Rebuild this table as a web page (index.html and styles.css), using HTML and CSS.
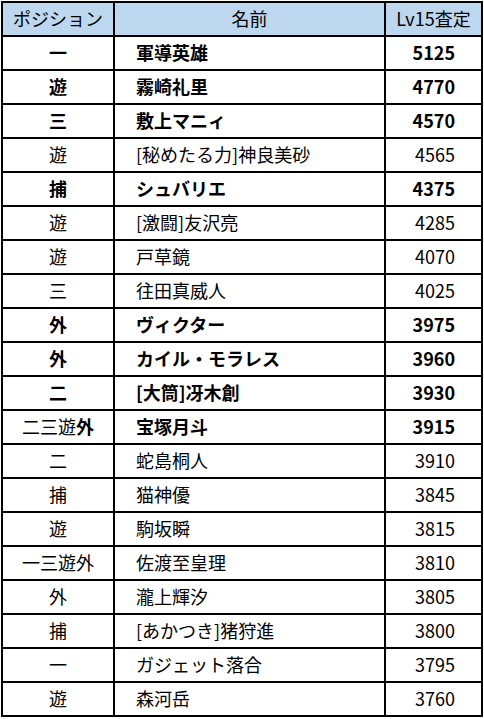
FILE: index.html
```html
<!DOCTYPE html>
<html lang="ja">
<head>
<meta charset="utf-8">
<link rel="stylesheet" href="styles.css">
</head>
<body>
<div class="sheet">
  <div class="cell head pos">ポジション</div>
  <div class="cell head name-h">名前</div>
  <div class="cell head val-h">Lv15査定</div>

  <div class="cell pos b">一</div><div class="cell name b">軍導英雄</div><div class="cell val b">5125</div>
  <div class="cell pos b">遊</div><div class="cell name b">霧崎礼里</div><div class="cell val b">4770</div>
  <div class="cell pos b">三</div><div class="cell name b">敷上マニィ</div><div class="cell val b">4570</div>
  <div class="cell pos">遊</div><div class="cell name">[秘めたる力]神良美砂</div><div class="cell val">4565</div>
  <div class="cell pos b">捕</div><div class="cell name b">シュバリエ</div><div class="cell val b">4375</div>
  <div class="cell pos">遊</div><div class="cell name">[激闘]友沢亮</div><div class="cell val">4285</div>
  <div class="cell pos">遊</div><div class="cell name">戸草鏡</div><div class="cell val">4070</div>
  <div class="cell pos">三</div><div class="cell name">往田真威人</div><div class="cell val">4025</div>
  <div class="cell pos b">外</div><div class="cell name b">ヴィクター</div><div class="cell val b">3975</div>
  <div class="cell pos b">外</div><div class="cell name b">カイル・モラレス</div><div class="cell val b">3960</div>
  <div class="cell pos b">二</div><div class="cell name b">[大筒]冴木創</div><div class="cell val b">3930</div>
  <div class="cell pos">二三遊<b>外</b></div><div class="cell name b">宝塚月斗</div><div class="cell val b">3915</div>
  <div class="cell pos">二</div><div class="cell name">蛇島桐人</div><div class="cell val">3910</div>
  <div class="cell pos">捕</div><div class="cell name">猫神優</div><div class="cell val">3845</div>
  <div class="cell pos">遊</div><div class="cell name">駒坂瞬</div><div class="cell val">3815</div>
  <div class="cell pos">一三遊外</div><div class="cell name">佐渡至皇理</div><div class="cell val">3810</div>
  <div class="cell pos">外</div><div class="cell name">瀧上輝汐</div><div class="cell val">3805</div>
  <div class="cell pos">捕</div><div class="cell name">[あかつき]猪狩進</div><div class="cell val">3800</div>
  <div class="cell pos">一</div><div class="cell name">ガジェット落合</div><div class="cell val">3795</div>
  <div class="cell pos">遊</div><div class="cell name">森河岳</div><div class="cell val">3760</div>
</div>
</body>
</html>
```

FILE: styles.css
```css
html, body {
  margin: 0;
  padding: 0;
  background: #ffffff;
}
body {
  padding: 1px 0 0 1px;
  font-family: "Noto Sans CJK JP", "Noto Sans", sans-serif;
  font-size: 18px;
  color: #000000;
}
.sheet {
  display: grid;
  grid-template-columns: 112px 271px 97px;
  width: 482px;
  box-sizing: border-box;
  border-left: 2px solid #000;
  border-top: 2px solid #000;
}
.cell {
  box-sizing: border-box;
  height: 34px;
  border-right: 2px solid #000;
  border-bottom: 2px solid #000;
  display: flex;
  align-items: center;
  white-space: nowrap;
  line-height: 1;
  padding-bottom: 2px;
}
.head {
  background: #bdd7ee;
  font-weight: 400;
}
.pos {
  justify-content: center;
}
.name {
  padding-left: 21px;
}
.name-h {
  justify-content: center;
}
.val {
  justify-content: flex-end;
  padding-right: 26px;
}
.val-h {
  justify-content: center;
}
.b, .pos b {
  font-weight: 700;
}
```
